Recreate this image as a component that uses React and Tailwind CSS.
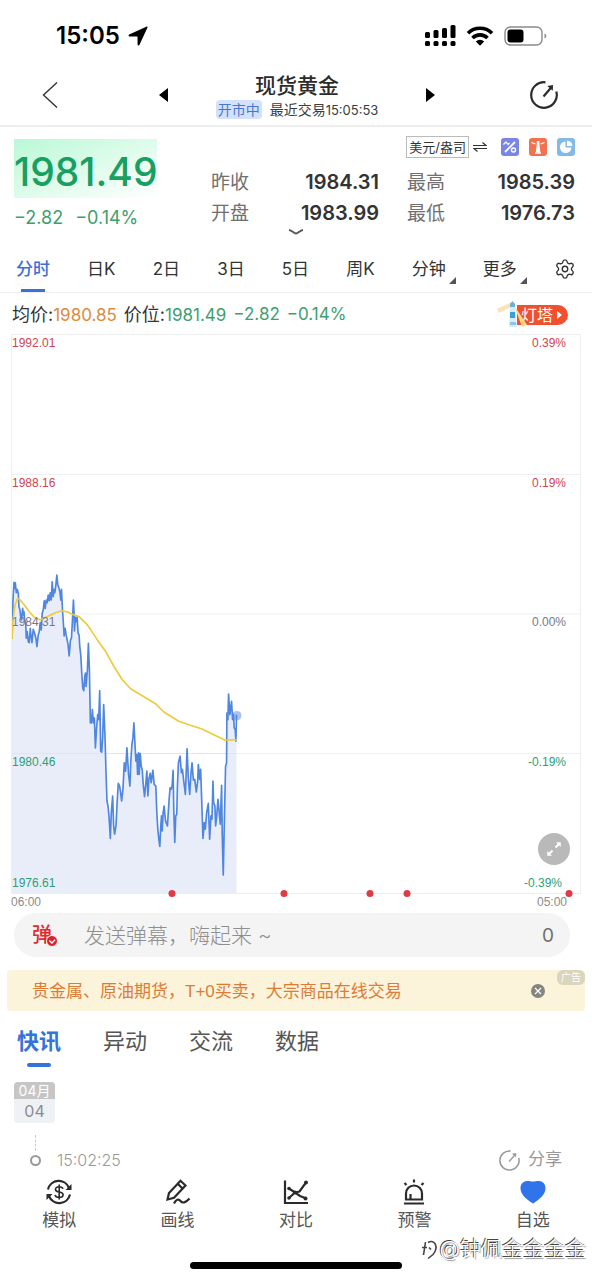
import { Settings } from 'lucide-react'
import clsx from 'clsx'

// x,y pairs in chart units, see the viewBox in PriceChart
const PRICE =
  '33,237 36,120 39,67 41,85 43,68 46,98 49,88 52,100 54,140 57,150 59,170 62,180 65,145 67,165 69,155 71,180 74,185 76,235 79,215 82,245 85,248 88,205 90,225 93,248 97,208 101,220 105,235 108,260 112,225 115,215 118,188 121,210 124,160 127,150 130,122 133,145 136,120 139,128 142,105 145,122 148,98 151,120 154,65 157,110 160,88 162,98 165,75 168,45 171,75 174,82 177,95 180,120 182,88 185,150 188,195 190,228 193,205 196,225 199,240 202,255 205,288 209,240 212,235 215,180 218,120 220,165 221,213 224,172 227,185 229,170 232,220 235,225 237,260 240,285 243,340 246,385 249,393 252,350 254,340 256,380 260,330 263,250 266,330 269,490 272,490 275,450 278,490 281,475 284,565 288,500 291,465 294,480 297,393 300,575 303,578 306,530 309,435 313,530 316,640 319,725 322,740 325,770 329,838 332,760 336,710 339,800 342,825 346,800 350,720 353,672 357,680 360,700 363,725 367,690 371,610 375,635 379,565 384,645 388,680 391,600 394,555 397,535 400,490 403,550 406,605 409,585 411,645 414,580 416,645 419,582 422,620 425,630 428,675 432,712 436,670 439,635 442,710 445,660 449,642 452,670 457,633 461,675 466,680 469,760 472,810 475,840 478,862 481,800 483,770 485,815 488,760 491,740 495,785 501,800 506,720 509,685 512,690 515,680 518,633 520,750 523,850 526,770 529,765 531,680 534,610 539,590 543,640 546,630 550,665 555,705 560,568 564,660 568,705 572,640 575,610 579,662 583,660 588,698 592,665 594,615 598,660 601,630 604,720 608,838 612,790 615,810 619,760 624,732 628,840 632,770 635,780 638,665 640,730 644,740 646,800 649,775 653,720 656,750 660,795 664,678 666,830 669,948 672,800 676,620 679,610 680,460 683,480 685,403 689,465 694,425 697,480 700,465 702,505 705,510 707,545 709,465'

const AVERAGE =
  '33,237 36,180 42,135 50,115 58,120 70,135 85,155 100,172 118,180 135,172 160,160 182,152 200,156 218,164 235,170 260,195 290,240 315,275 340,320 365,360 390,387 420,405 465,432 490,457 535,485 570,497 605,508 650,530 675,542 709,540'

const LEVELS = [
  { price: '1992.01', change: '0.39%', color: 'text-[#cf4450]' },
  { price: '1988.16', change: '0.19%', color: 'text-[#cf4450]' },
  { price: '1984.31', change: '0.00%', color: 'text-[#75798a]' },
  { price: '1980.46', change: '-0.19%', color: 'text-[#2f9e75]' },
]

const EVENTS = ['28.2%', '47.8%', '63%', '69.6%', '98%']

const PERIODS = ['分时', '日K', '2日', '3日', '5日', '周K']
const FEEDS = ['快讯', '异动', '交流', '数据']

function ShareIcon({ className, strokeWidth = 2 }) {
  return (
    <svg viewBox="0 0 28 28" fill="none" stroke="currentColor" strokeWidth={strokeWidth} className={className}>
      <path d="M15.5 1.3A12.8 12.8 0 1 0 26.3 10.5" />
      <path d="M13.5 15.5 22 5.5" />
      <path d="M17.3 5 23 4l-.2 5.800z" fill="currentColor" stroke="none" />
    </svg>
  )
}

function StatusBar() {
  return (
    <div className="flex h-16 items-center justify-between pt-2 pr-11 pl-14 text-black">
      <div className="flex items-center gap-2">
        <span className="text-[24px] leading-7 font-semibold">15:05</span>
        <svg viewBox="0 0 20 20" className="size-5">
          <path d="M18.300.7c.9-.4 1.500.2 1.100 1.100l-7.900 17c-.5 1-1.900.8-1.900-.4l-.1-7.900-7.900-.1c-1.200 0-1.400-1.500-.4-1.900z" fill="currentColor" />
        </svg>
      </div>
      <div className="flex items-center gap-2">
        <svg viewBox="0 0 31 22" fill="currentColor" className="h-[22px] w-[31px]">
          <rect x="0" y="7" width="5" height="6" rx="1.500" />
          <rect x="8.500" y="5" width="5" height="8" rx="1.500" />
          <rect x="17" y="3" width="5" height="10" rx="1.500" />
          <rect x="25.500" y="0" width="5" height="13" rx="1.500" />
          <rect x="0" y="16" width="5" height="5" rx="1.500" />
          <rect x="8.500" y="16" width="5" height="5" rx="1.500" />
          <rect x="17" y="16" width="5" height="5" rx="1.500" />
          <rect x="25.500" y="16" width="5" height="5" rx="1.500" />
        </svg>
        <svg viewBox="0 0 28 20" fill="none" stroke="currentColor" strokeWidth="3.600" className="mx-0.5 h-5 w-7">
          <path d="M2 7.200a17 17 0 0 1 24 0" />
          <path d="M6.500 12a10.600 10.600 0 0 1 15 0" />
          <path d="M14 19.800l-4.200-4.300a6 6 0 0 1 8.400 0z" fill="currentColor" stroke="none" />
        </svg>
        <svg viewBox="0 0 44 20" className="h-5 w-11">
          <rect x="1" y="1" width="37" height="18" rx="5.500" fill="none" stroke="#8a8a8a" strokeWidth="1.400" />
          <rect x="3.500" y="3.500" width="16" height="13" rx="3" fill="#000" />
          <path d="M40.500 7.500c2.400.8 2.400 4.200 0 5z" fill="#8a8a8a" />
        </svg>
      </div>
    </div>
  )
}

function Header() {
  return (
    <header className="flex h-[63px] items-center justify-between border-b-2 border-[#eeeeee] pr-[34px] pl-9">
      <button aria-label="返回" className="flex w-7 justify-center">
        <svg viewBox="0 0 16 26" fill="none" stroke="#333" strokeWidth="1.400" className="h-[26px] w-4">
          <path d="M15 .5 1.500 13 15 25.500" />
        </svg>
      </button>
      <div className="flex items-center gap-11">
        <button aria-label="上一个" className="px-1">
          <svg viewBox="0 0 9 14" className="h-3.5 w-[9px]">
            <path d="M9 0v14L0 7z" />
          </svg>
        </button>
        <div className="flex flex-col items-center pt-0.5">
          <h1 className="text-[21px] leading-7 font-medium text-[#2b2b2b]">现货黄金</h1>
          <div className="flex items-center gap-2 text-[14px] leading-[19px]">
            <span className="rounded-sm bg-[#d3e1fb] px-0.5 text-[#4677d6]">开市中</span>
            <span className="text-[#3c3c3c]">
              最近交易<span className="text-[13px]">15:05:53</span>
            </span>
          </div>
        </div>
        <button aria-label="下一个" className="px-1">
          <svg viewBox="0 0 9 14" className="h-3.5 w-[9px]">
            <path d="M0 0v14l9-7z" />
          </svg>
        </button>
      </div>
      <button aria-label="分享" className="text-[#2b2b2b]">
        <ShareIcon className="size-7" strokeWidth={2.2} />
      </button>
    </header>
  )
}

function QuoteCell({ label, value }) {
  return (
    <div className="flex items-center justify-between">
      <dt className="text-[19px] text-[#707070]">{label}</dt>
      <dd className="text-[20px] font-semibold text-[#333]">{value}</dd>
    </div>
  )
}

function Quote() {
  return (
    <section className="relative flex h-[118px] justify-between pr-[17px] pl-3.5">
      <div className="pt-3">
        <div className="bg-linear-to-br from-[#b9f8d6] to-white pt-1.5 text-[39px] leading-[53px] font-medium text-[#17a062]">
          1981.49
        </div>
        <div className="flex gap-3 pt-2 text-[18px] leading-6 text-[#3d9e70]">
          <span>−2.82</span>
          <span>−0.14%</span>
        </div>
      </div>
      <div className="w-[364px] pt-[9px]">
        <div className="flex items-center justify-end gap-2.5">
          <button className="mr-1 flex items-center gap-1 text-[#333]">
            <span className="border border-[#bbb] px-0.5 text-[13px] leading-5">美元/盎司</span>
            <svg viewBox="0 0 14 10" fill="none" stroke="currentColor" strokeWidth="1.200" className="h-2.5 w-3.5">
              <path d="M0 3.500h13L9.500.5M14 6.500H1l3.500 3" />
            </svg>
          </button>
          <button aria-label="涨跌幅">
            <svg viewBox="0 0 18 18" className="size-[18px]">
              <rect width="18" height="18" rx="3" fill="#7b86e4" />
              <path d="M4 14 14 4" stroke="#fff" strokeWidth="1.800" />
              <path d="M2.500 6.500 5 4l2 2.500L8.500 5" fill="none" stroke="#fff" strokeWidth="1.200" />
              <circle cx="12.500" cy="12" r="2" fill="none" stroke="#fff" strokeWidth="1.400" />
            </svg>
          </button>
          <button aria-label="灯塔">
            <svg viewBox="0 0 18 18" className="size-[18px]">
              <rect width="18" height="18" rx="3" fill="#f2714f" />
              <path d="M7.800 3h2.600v3l1 8.500H6.800l1-8.500z" fill="#fff" />
              <path d="M2.500 4.500 6.500 6M15.500 4.500l-4 1.500M6 15h6" stroke="#fff" strokeWidth="1.300" />
            </svg>
          </button>
          <button aria-label="统计">
            <svg viewBox="0 0 18 18" className="size-[18px]">
              <rect width="18" height="18" rx="3" fill="#82b9e8" />
              <path d="M8.500 3.500a5.800 5.800 0 1 0 6 6h-6z" fill="#fff" />
              <path d="M10 2.500a5.500 5.500 0 0 1 5.500 5.500H10z" fill="#fff" />
            </svg>
          </button>
        </div>
        <dl className="grid grid-cols-2 gap-x-7 pt-[9px] leading-[31px]">
          <QuoteCell label="昨收" value="1984.31" />
          <QuoteCell label="最高" value="1985.39" />
          <QuoteCell label="开盘" value="1983.99" />
          <QuoteCell label="最低" value="1976.73" />
        </dl>
      </div>
      <button aria-label="展开" className="absolute bottom-2.5 left-1/2 -translate-x-1/2">
        <svg viewBox="0 0 16 6" className="h-1.5 w-4">
          <path d="M1 1c3 .3 5 3.500 7 3.500S12 1.300 15 1" fill="none" stroke="#555" strokeWidth="1.800" />
        </svg>
      </button>
    </section>
  )
}

function Periods() {
  return (
    <nav className="flex h-12 items-stretch justify-between border-b border-[#eeeeee] pr-4 pl-4 text-[17px] text-[#333]">
      {PERIODS.map((name, i) => (
        <button
          key={name}
          className={clsx('relative pt-0.5', i === 0 && 'font-medium text-[#3a6fdc]')}
        >
          {name}
          {i === 0 && <span className="absolute bottom-0 left-1/2 h-[3px] w-6 -translate-x-1/2 bg-[#3a6fdc]" />}
        </button>
      ))}
      {['分钟', '更多'].map((name) => (
        <button key={name} className="relative pt-0.5">
          {name}
          <svg viewBox="0 0 7 7" className="absolute -right-2.5 bottom-2 size-[7px]">
            <path d="M7 0v7H0z" fill="#555" />
          </svg>
        </button>
      ))}
      <button aria-label="设置">
        <Settings size={22} strokeWidth={1.5} />
      </button>
    </nav>
  )
}

function Lighthouse() {
  return (
    <button className="relative flex h-5 items-center gap-1 rounded-r-full bg-[#f0502e] pr-1.5 pl-1 text-[16px] leading-5 text-white">
      灯塔
      <svg viewBox="0 0 5 8" className="h-2 w-[5px]">
        <path d="M0 0v8l5-4z" fill="#fff" />
      </svg>
      <svg viewBox="0 0 30 28" className="absolute -top-1 -left-5 h-7 w-[30px]">
        <path d="M0 8 15 1l1 4L2 12z" fill="#fbe3b4" />
        <path d="M17 4 30 24l-5 2z" fill="#fcd48a" />
        <path d="M13 6h5l2 20h-8z" fill="#d5edf8" />
        <path d="M13 11h5v6h-5z" fill="#3b9fd8" />
        <path d="M13 3l2.500-3L18 3v3h-5z" fill="#6fb0d6" />
        <path d="M13 21h6v3h-6z" fill="#8cc7e8" />
      </svg>
    </button>
  )
}

function AverageRow() {
  return (
    <div className="flex h-[41px] items-center justify-between pt-0.5 pr-6 pl-3 text-[17px]">
      <div className="flex items-center gap-[7px] text-[#3d9e70]">
        <span className="text-[#e08a3c]">
          <span className="text-[18px] text-[#333]">均价:</span>1980.85
        </span>
        <span>
          <span className="text-[18px] text-[#333]">价位:</span>1981.49
        </span>
        <span>−2.82</span>
        <span>−0.14%</span>
      </div>
      <Lighthouse />
    </div>
  )
}

function PriceChart() {
  return (
    <section className="pr-[11px] pl-[11px] font-['Liberation_Sans',sans-serif] text-[12px]">
      <div className="relative h-[560px] border border-[#eeeeee]">
        <svg viewBox="33 -678 1710 1680" preserveAspectRatio="none" className="absolute inset-0 size-full">
          <g stroke="#eef0f3" strokeWidth="3">
            <path d="M33-258h1710M33 162h1710M33 582h1710" />
          </g>
          <polygon points={`33,1002 ${PRICE} 709,1002`} fill="#e9edfa" />
          <path d="M33 582h676" stroke="#dfe4f3" strokeWidth="3" />
          <polyline points={PRICE} fill="none" stroke="#4f86df" strokeWidth="5" strokeLinejoin="round" />
          <polyline points={AVERAGE} fill="none" stroke="#edcb3c" strokeWidth="5" strokeLinejoin="round" />
          <circle cx="710" cy="468" r="14" fill="#5b86e6" fillOpacity="0.5" />
        </svg>
        <div className="relative grid h-full grid-rows-4">
          {LEVELS.map(({ price, change, color }) => (
            <div key={price} className={clsx('flex justify-between pr-3.5 leading-4', color)}>
              <span>{price}</span>
              <span>{change}</span>
            </div>
          ))}
        </div>
        <div className="absolute inset-x-0 bottom-0.5 flex justify-between pr-[18px] leading-4 text-[#2f9e75]">
          <span>1976.61</span>
          <span>-0.39%</span>
        </div>
        <button
          aria-label="全屏"
          className="absolute right-2.5 bottom-7 flex size-8 items-center justify-center rounded-full bg-[#b9b9b9]"
        >
          <svg viewBox="0 0 16 16" className="size-4" fill="#fff" stroke="#fff">
            <path d="M9.500 6.500 13 3M6.500 9.500 3 13" strokeWidth="2" />
            <path d="M10.500 1.500h4v4zM1.500 10.500v4h4z" strokeWidth="0.500" />
          </svg>
        </button>
        {EVENTS.map((left) => (
          <span
            key={left}
            className="absolute -bottom-1 size-[7px] -translate-x-1/2 rounded-full bg-[#e03a44]"
            style={{ left }}
          />
        ))}
      </div>
      <div className="flex h-[19px] justify-between pr-3.5 leading-4 text-[#8c8c8c]">
        <span>06:00</span>
        <span>05:00</span>
      </div>
    </section>
  )
}

function Danmu() {
  return (
    <div className="mr-[22px] ml-3.5 flex h-11 items-center rounded-full bg-[#f4f4f4] pr-4 pl-[18px]">
      <button aria-label="弹幕开关" className="relative w-[52px] text-left text-[20px] leading-6 font-medium text-[#e02b2b]">
        弹
        <svg viewBox="0 0 12 12" className="absolute bottom-0 left-3.5 size-3">
          <circle cx="6" cy="6" r="5.500" fill="#d8232a" stroke="#f4f4f4" />
          <path d="M3.300 5.500 6 8l3-3.200" fill="none" stroke="#fff" strokeWidth="1.500" />
        </svg>
      </button>
      <input
        type="text"
        aria-label="发送弹幕"
        placeholder="发送弹幕，嗨起来 ~"
        className="min-w-0 flex-1 bg-transparent pt-0.5 text-[21px] leading-7 font-light outline-none placeholder:text-[#8f8f8f]"
      />
      <span className="pt-0.5 text-[19px] text-[#707070]">0</span>
    </div>
  )
}

function AdBanner() {
  return (
    <div className="relative mt-[13px] mr-[7px] ml-[7px] flex h-[41px] items-center justify-between rounded bg-[#fbf4db] pr-10 pl-[25px]">
      <a href="#ad" className="pt-0.5 font-['Liberation_Sans','Noto_Sans_CJK_SC',sans-serif] text-[17px] text-[#dd7c36]">
        贵金属、原油期货，T+0买卖，大宗商品在线交易
      </a>
      <button aria-label="关闭广告">
        <svg viewBox="0 0 14 14" className="size-3.5">
          <circle cx="7" cy="7" r="7" fill="#86847f" />
          <path d="m4 4 6 6m0-6-6 6" stroke="#fff" strokeWidth="1.200" />
        </svg>
      </button>
      <span className="absolute top-0 right-0 rounded-md bg-[#dad5bd] px-1 text-[10px] leading-[15px] text-white">广告</span>
    </div>
  )
}

function News() {
  return (
    <section>
      <nav className="flex h-[58px] gap-[42px] pt-3 pl-[17px] text-[22px] leading-9 text-[#555]">
        {FEEDS.map((name, i) => (
          <button
            key={name}
            className={clsx('relative h-11', i === 0 && 'font-bold text-[#3473db]')}
          >
            <span className="block h-full">{name}</span>
            {i === 0 && (
              <span className="absolute bottom-0 left-1/2 h-1 w-6 -translate-x-1/2 rounded-sm bg-[#3473db]" />
            )}
          </button>
        ))}
      </nav>
      <div className="pt-[13px] pl-3.5">
        <div className="w-[41px] overflow-hidden rounded bg-[#eef2f5] text-center">
          <div className="bg-[#c6c6c6] text-[14px] leading-[17px] text-white">04月</div>
          <div className="text-[16px] leading-6 text-[#8c8c8c]">04</div>
        </div>
        <div className="mt-3 ml-[21px] h-4 w-0 border-l border-dashed border-[#ccc]" />
      </div>
      <div className="flex h-[18px] items-center justify-between pr-[30px] pl-[30px] text-[#999]">
        <div className="flex items-center gap-4">
          <span className="size-[11px] rounded-full border-2 border-[#999]" />
          <time className="text-[16px] font-light">15:02:25</time>
        </div>
        <button className="flex items-center gap-2 text-[17px]">
          <ShareIcon className="size-[21px]" />
          分享
        </button>
      </div>
    </section>
  )
}

const TOOLS = [
  {
    name: '模拟',
    icon: (
      <>
        <path d="M2 10.500A11 11 0 0 1 23 9M24 15.500A11 11 0 0 1 3 17" />
        <path d="M25.500 5v6h-6zM.5 21v-6h6z" fill="currentColor" stroke="none" />
        <path d="M17 9.800c-.5-1.500-2-2.100-3.800-2.100-2.200 0-3.700 1-3.700 2.700 0 3.800 7.600 1.500 7.600 5.300 0 1.800-1.700 2.700-3.900 2.700-2.200 0-3.800-.9-4.100-2.600M13.200 5.500v15" strokeWidth="1.600" />
      </>
    ),
  },
  {
    name: '画线',
    icon: (
      <>
        <path d="M2.500 20.500 4 14 15.500 1.800l5 4.700L9 18.800zM13 5l4.500 4.500" />
        <path d="M9 24.500c2-4 4.500-5 6.500-2.500s5 2 9-2.500" />
      </>
    ),
  },
  {
    name: '对比',
    icon: (
      <>
        <path d="M2 1.500V24h23" />
        <path d="m6 19 6-5.500 4.500-1 6.500-9M6 9.500l6 4 5 3.500 5 2" />
        <circle cx="23" cy="3.500" r="2" fill="currentColor" stroke="none" />
        <circle cx="22.500" cy="19.500" r="2" fill="currentColor" stroke="none" />
        <circle cx="6" cy="9.500" r="1.800" fill="currentColor" stroke="none" />
        <circle cx="6" cy="19" r="1.800" fill="currentColor" stroke="none" />
        <circle cx="12" cy="13.500" r="2" fill="currentColor" stroke="none" />
      </>
    ),
  },
  {
    name: '预警',
    icon: (
      <>
        <path d="M5 20.500v-6a8 8 0 0 1 16 0v6zM3 24.500h20M9.500 20.500V15" />
        <path d="M13 .5v3M3.500 4 5.500 6M22.500 4l-2 2" />
      </>
    ),
  },
  {
    name: '自选',
    icon: (
      <path
        d="M13 24.500C6.500 20.500.5 15.500.5 9.300.5 5 3.500 2 7 2c2.500 0 4.200.5 6 .5S16.500 2 19 2c3.500 0 6.500 3 6.500 7.300 0 6.200-6 11.200-12.500 15.200z"
        fill="#2f74ea"
        stroke="none"
      />
    ),
  },
]

function ToolBar() {
  return (
    <footer className="relative pt-2.5 pb-[11px]">
      <nav className="grid grid-cols-5">
        {TOOLS.map(({ name, icon }) => (
          <button key={name} className="flex flex-col items-center gap-[3px] text-[17px] leading-6 text-[#555]">
            <svg viewBox="0 0 26 26" fill="none" stroke="currentColor" strokeWidth="2.200" className="size-[26px] text-[#2b2b2b]">
              {icon}
            </svg>
            {name}
          </button>
        ))}
      </nav>
      <div className="mx-auto mt-[30px] h-[7px] w-[212px] rounded-full bg-black" />
      <div className="absolute right-1.5 bottom-[17px] flex items-center text-[21px] leading-7 font-light text-white [text-shadow:-1px_-1px_0_#444,1px_1px_1px_#999]">
        <svg viewBox="0 0 20 22" fill="none" stroke="#444" strokeWidth="1.600" className="h-[22px] w-5">
          <path d="M2 9.500h5M5.500 4 3.500 17M8 4.500c7-4 11 5 5 12l-5 4M9 9.500l2 2" />
        </svg>
        @钟佩金金金金
      </div>
    </footer>
  )
}

export default function App() {
  return (
    <main className="min-h-screen bg-white font-['Inter','Noto_Sans_CJK_SC',sans-serif]">
      <StatusBar />
      <Header />
      <Quote />
      <Periods />
      <AverageRow />
      <PriceChart />
      <Danmu />
      <AdBanner />
      <News />
      <ToolBar />
    </main>
  )
}
